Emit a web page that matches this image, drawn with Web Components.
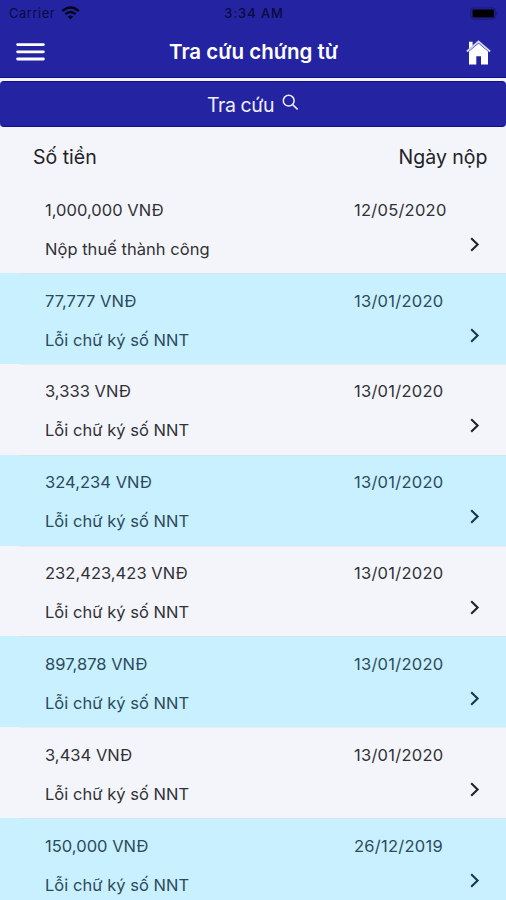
<!DOCTYPE html>
<html lang="vi">
<head>
<meta charset="utf-8">
<title>Tra cứu chứng từ</title>
<style>
  html, body { margin: 0; height: 100%; overflow: hidden; }
  body { background: #f4f5fa; font-family: Inter, "Liberation Sans", sans-serif; }
</style>
</head>
<body>
<voucher-page></voucher-page>

<script>
(function() {

// attaches an open shadow root with the given markup
function render(el, html) {
  el.attachShadow({mode: 'open'}).innerHTML = html;
}

class StatusBar extends HTMLElement {
  constructor() {
    super();
    render(this, `<style>
      :host { display: grid; grid-template-columns: 1fr auto 1fr; align-items: center; height: 26px; padding: 0 7px 0 9px; color: #0b0b3c; font-size: 13px; line-height: 26px; }
      .left { display: flex; align-items: center; gap: 6px; letter-spacing: .5px; }
      .time { font-weight: 500; letter-spacing: .9px; }
      .battery { justify-self: end; }
      svg { display: block; }
    </style>
    <span class="left"><span>Carrier</span>
      <svg width="19" height="14" viewBox="0 0 19 14" fill="none" stroke="#050518" stroke-width="2.4">
        <path d="M1.2 5.2Q9.5-2 17.8 5.2M4.3 8.2Q9.5 3.8 14.7 8.2"/>
        <path d="M9.5 13.4L6.7 10.5Q9.5 8.3 12.3 10.5Z" fill="#050518" stroke="none"/>
      </svg>
    </span>
    <span class="time">3:34 AM</span>
    <svg class="battery" width="29" height="13" viewBox="0 0 29 13">
      <rect x=".8" y=".8" width="24.5" height="11.4" rx="3" fill="none" stroke="#1b1b7c" stroke-width="1.2"/>
      <rect x="2.5" y="2.5" width="21.5" height="8" rx="1" fill="#000"/>
      <path d="M26.5 4.5Q29 6.5 26.5 8.5Z" fill="#171765"/>
    </svg>`);
  }
}

class NavBar extends HTMLElement {
  constructor() {
    super();
    render(this, `<style>
      :host { display: grid; grid-template-columns: 1fr auto 1fr; align-items: center; height: 52px; padding: 0 15px 0 16px; color: #fff; box-sizing: border-box; }
      h1 { margin: 0; font-size: 20.5px; font-weight: 600; line-height: 26px; }
      svg { display: block; }
      .home { justify-self: end; }
    </style>
    <svg width="29" height="20" viewBox="0 0 29 20" stroke="#fff" stroke-width="2.8" stroke-linecap="round">
      <path d="M1.6 2.6H27.4M1.6 9.8H27.4M1.6 17H27.4"/>
    </svg>
    <h1><slot></slot></h1>
    <svg class="home" width="25" height="25" viewBox="0 0 25 25" fill="#fff">
      <path d="M3 1.8H6.6V6L3 9.2Z"/>
      <path d="M.9 11.4L12.5 1.6L24.1 11.4" fill="none" stroke="#cdd4f6" stroke-width="2"/>
      <path d="M3 11.6L12.5 3.6L22 11.6V24.5H15V16.3H10.3V24.5H3Z"/>
    </svg>`);
  }
}

class SearchButton extends HTMLElement {
  constructor() {
    super();
    render(this, `<style>
      :host { display: block; }
      button { display: flex; justify-content: center; gap: 8px; width: 100%; height: 46px; margin: 0; padding: 0; border: solid #10108e; border-width: 1px 0; border-radius: 4px; background: #2424a2; color: #eef0ff; font: 400 19.5px/46px Inter, sans-serif; letter-spacing: -.4px; }
      svg { display: block; margin-top: 12px; }
    </style>
    <button type="button"><slot></slot>
      <svg width="17" height="17" viewBox="0 0 17 17" fill="none" stroke="#eef0ff" stroke-width="1.5">
        <circle cx="6.7" cy="6.7" r="5.4"/><path d="M10.6 10.6L15.6 15.4"/>
      </svg>
    </button>`);
  }
}

class VoucherRow extends HTMLElement {
  constructor() {
    super();
    render(this, `<style>
      :host { display: grid; grid-template-columns: 1fr 113px 23px; grid-template-rows: 39px 39px; box-sizing: border-box; height: 90.9px; padding: 8.7px 16px 0 45px; color: #303136; font-size: 16.5px; line-height: 39px; white-space: nowrap; }
      :host([alt]) { background: linear-gradient(#d3e6f1, #d3e6f1) 20px 0 / 100% 1px no-repeat #c9f0ff; color: #2c4a5c; }
      :host(:not([alt])) { background: linear-gradient(#e9edf2, #e9edf2) 20px 0 / 100% 1px no-repeat; }
      :host(:first-child) { background: none; }
      .amount { letter-spacing: .03px; }
      .date { grid-column: 2 / 4; letter-spacing: .25px; }
      .status { grid-column: 1 / 3; letter-spacing: .03px; }
      svg { display: block; margin: 7px 0 0 2px; color: #222328; }
      :host([alt]) svg { color: #193747; }
    </style>
    <span class="amount"><slot name="amount"></slot></span>
    <span class="date"><slot name="date"></slot></span>
    <span class="status"><slot name="status"></slot></span>
    <svg width="12" height="16" viewBox="0 0 12 16" fill="none" stroke="currentColor" stroke-width="2.1">
      <path d="M2.2 1.3L8.6 7.5L2.2 13.7"/>
    </svg>`);
  }
}

class VoucherPage extends HTMLElement {
  constructor() {
    super();
    const failed = 'Lỗi chữ ký số NNT';
    const vouchers = [
      ['1,000,000', '12/05/2020', 'Nộp thuế thành công'],
      ['77,777', '13/01/2020', failed],
      ['3,333', '13/01/2020', failed],
      ['324,234', '13/01/2020', failed],
      ['232,423,423', '13/01/2020', failed],
      ['897,878', '13/01/2020', failed],
      ['3,434', '13/01/2020', failed],
      ['150,000', '26/12/2019', failed]
    ];
    const rows = vouchers.map(([amount, date, status], i) => `
      <voucher-row ${i % 2 ? 'alt' : ''}>
        <span slot="amount">${amount} VNĐ</span>
        <span slot="date">${date}</span>
        <span slot="status">${status}</span>
      </voucher-row>`).join('');

    render(this, `<style>
      :host { display: block; height: 100vh; overflow: hidden; }
      header { background: #2424a2; border-bottom: 1px solid #10108e; height: 78px; box-sizing: border-box; }
      search-button { padding-top: 3px; }
      .heading { display: flex; justify-content: space-between; height: 55px; padding: 0 18.5px 0 33px; box-sizing: border-box; color: #222328; font-size: 19.5px; line-height: 60px; }
    </style>
    <header>
      <status-bar></status-bar>
      <nav-bar>Tra cứu chứng từ</nav-bar>
    </header>
    <search-button>Tra cứu</search-button>
    <div class="heading"><span>Số tiền</span><span>Ngày nộp</span></div>
    <main>${rows}</main>`);
  }
}

customElements.define('status-bar', StatusBar);
customElements.define('nav-bar', NavBar);
customElements.define('search-button', SearchButton);
customElements.define('voucher-row', VoucherRow);
customElements.define('voucher-page', VoucherPage);

}());
</script>
</body>
</html>
